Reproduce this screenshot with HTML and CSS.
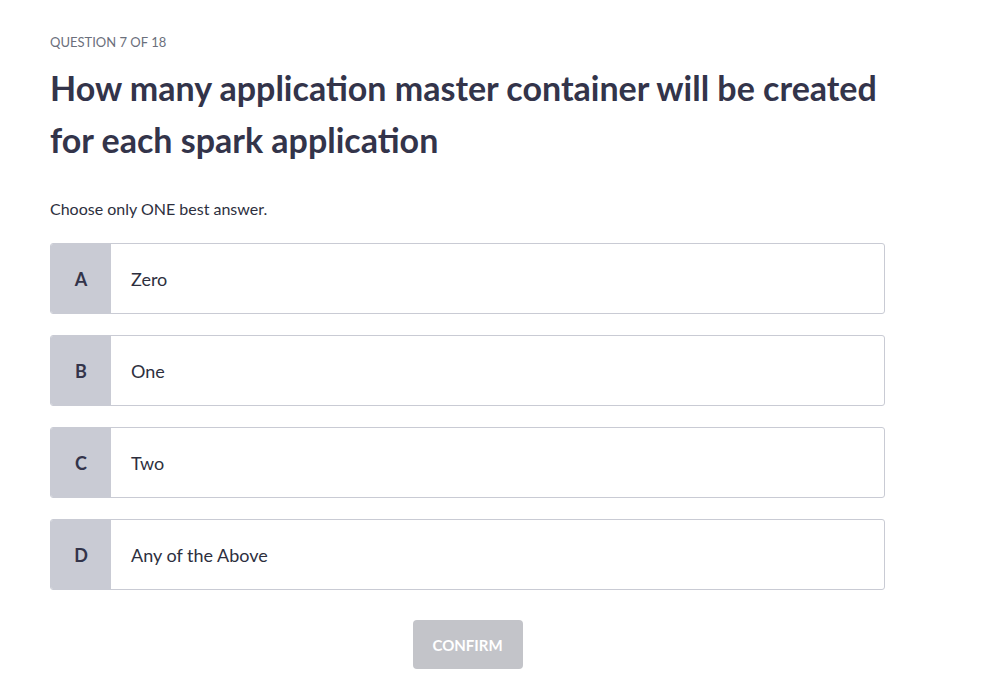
FILE: index.html
```html
<!DOCTYPE html>
<html>
<head>
<meta charset="utf-8">
<link rel="stylesheet" href="styles.css">
</head>
<body>
<main class="quiz">
  <div class="counter">QUESTION 7 OF 18</div>
  <h1 class="question">How many application master container will be created for each spark application</h1>
  <p class="hint">Choose only ONE best answer.</p>
  <div class="options">
    <div class="option"><span class="letter">A</span><span class="text">Zero</span></div>
    <div class="option"><span class="letter">B</span><span class="text">One</span></div>
    <div class="option"><span class="letter">C</span><span class="text">Two</span></div>
    <div class="option"><span class="letter">D</span><span class="text">Any of the Above</span></div>
  </div>
  <div class="actions"><button class="confirm">CONFIRM</button></div>
</main>
</body>
</html>
```
FILE: styles.css
```css
html, body { margin: 0; padding: 0; background: #fff; }
body { font-family: Lato, "Open Sans", sans-serif; color: #2d2f3e; }
.quiz { width: 835px; padding: 33px 0 0 50px; }
.counter { font-size: 13px; color: #6b6f7c; line-height: 18px; }
.question { margin: 11px 0 0; font-size: 34px; line-height: 52px; font-weight: 700; color: #33344a; width: 850px; }
.hint { margin: 33px 0 0; font-size: 16px; line-height: 20px; color: #2d2f3e; }
.options { margin-top: 24px; display: flex; flex-direction: column; gap: 21px; }
.option { display: flex; height: 71px; box-sizing: border-box; border: 1px solid #c9cbd4; border-radius: 3px; overflow: hidden; background: #fff; }
.letter { width: 60px; background: #c9cbd4; display: flex; align-items: center; justify-content: center; font-weight: 700; font-size: 18px; color: #33344a; }
.text { display: flex; align-items: center; padding-left: 20px; font-size: 18px; color: #2d2f3e; }
.actions { display: flex; justify-content: center; margin-top: 30px; }
.confirm { width: 110px; height: 49px; border: 0; border-radius: 4px; background: #c3c4c9; color: #fff; font-family: Lato, sans-serif; font-weight: 700; font-size: 15px; }
```
